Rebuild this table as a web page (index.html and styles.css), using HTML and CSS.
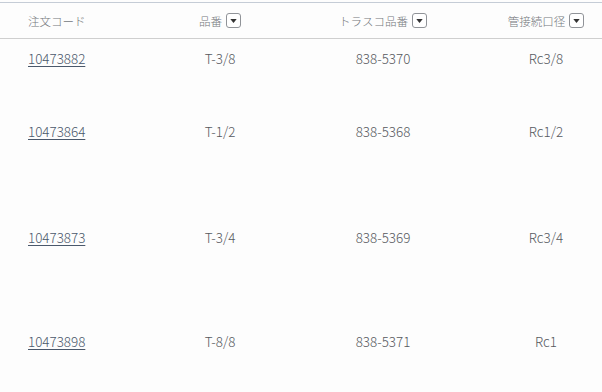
FILE: index.html
```html
<!DOCTYPE html>
<html lang="ja">
<head>
<meta charset="utf-8">
<link rel="stylesheet" href="styles.css">
</head>
<body>
<div class="table">
  <div class="row head">
    <div class="cell first">注文コード</div>
    <div class="cell">品番<span class="dd"><svg viewBox="0 0 8 5" width="7" height="4"><path d="M0 0H8L4 5Z" fill="#333"/></svg></span></div>
    <div class="cell">トラスコ品番<span class="dd"><svg viewBox="0 0 8 5" width="7" height="4"><path d="M0 0H8L4 5Z" fill="#333"/></svg></span></div>
    <div class="cell">管接続口径<span class="dd"><svg viewBox="0 0 8 5" width="7" height="4"><path d="M0 0H8L4 5Z" fill="#333"/></svg></span></div>
  </div>
  <div class="row body r1">
    <div class="cell first"><a href="#">10473882</a></div>
    <div class="cell">T-3/8</div>
    <div class="cell">838-5370</div>
    <div class="cell">Rc3/8</div>
  </div>
  <div class="row body r2">
    <div class="cell first"><a href="#">10473864</a></div>
    <div class="cell">T-1/2</div>
    <div class="cell">838-5368</div>
    <div class="cell">Rc1/2</div>
  </div>
  <div class="row body r3">
    <div class="cell first"><a href="#">10473873</a></div>
    <div class="cell">T-3/4</div>
    <div class="cell">838-5369</div>
    <div class="cell">Rc3/4</div>
  </div>
  <div class="row body r4">
    <div class="cell first"><a href="#">10473898</a></div>
    <div class="cell">T-8/8</div>
    <div class="cell">838-5371</div>
    <div class="cell">Rc1</div>
  </div>
</div>
</body>
</html>
```
FILE: styles.css
```css
html, body {
  margin: 0;
  padding: 0;
  background: #fdfdfd;
  overflow: hidden;
}
body {
  font-family: "Noto Sans CJK JP", "Noto Sans", sans-serif;
  font-weight: 300;
  color: #56595e;
}
.table {
  margin-top: 2px;
  border-top: 1px solid #c5ccd6;
  width: 628px;
}
.row {
  display: grid;
  grid-template-columns: 138px 164px 162px 164px;
}
.head {
  height: 35px;
  border-bottom: 1px solid #cfcfcf;
  font-size: 11.5px;
  color: #74777c;
  align-items: center;
}
.head .cell {
  display: flex;
  align-items: center;
  justify-content: center;
}
.head .cell.first {
  justify-content: flex-start;
}
.cell.first {
  padding-left: 28px;
  text-align: left;
}
.body .cell {
  text-align: center;
  font-size: 13.4px;
  line-height: 19px;
  padding-top: 10px;
}
.body .cell.first {
  text-align: left;
}
.r1 { height: 73px; }
.r2 { height: 106px; }
.r3 { height: 104px; }
.r4 { height: 70px; }
a {
  color: #4a586b;
  text-decoration: underline;
  text-underline-offset: 2px;
}
.dd {
  display: inline-flex;
  align-items: center;
  justify-content: center;
  width: 15px;
  height: 15px;
  margin-left: 4px;
  border: 1px solid #909398;
  border-radius: 3px;
  box-sizing: border-box;
  background: #fff;
}
.dd svg {
  display: block;
  margin-top: 1px;
}
```
